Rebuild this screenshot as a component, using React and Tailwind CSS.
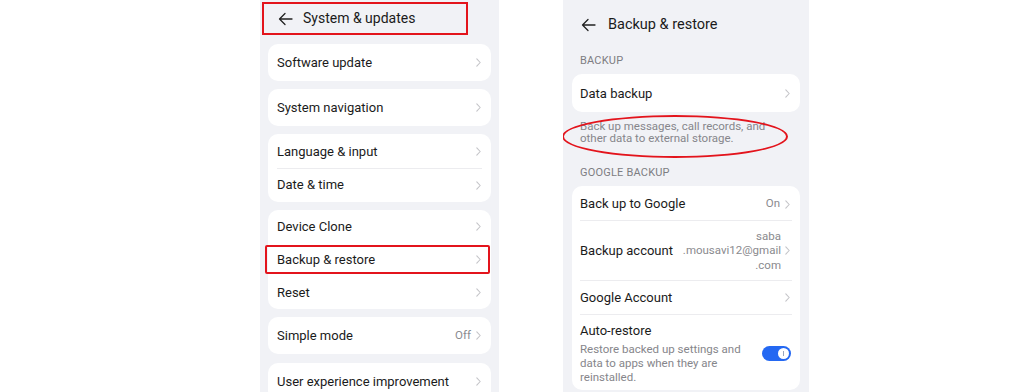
import React from "react";

const font = { fontFamily: "Roboto, 'Noto Sans', Arial, sans-serif" };

function Chevron() {
  return (
    <svg width="5" height="9" viewBox="0 0 5 9" className="shrink-0">
      <path d="M0.8 0.8 L4.2 4.5 L0.8 8.2" fill="none" stroke="#c4c4c8" strokeWidth="1.1" strokeLinecap="round" strokeLinejoin="round" />
    </svg>
  );
}

function Arrow() {
  return (
    <svg width="15" height="14" viewBox="0 0 15 14" className="shrink-0">
      <path d="M14 7 H1.5 M7 1.5 L1.5 7 L7 12.5" fill="none" stroke="#222" strokeWidth="1.3" strokeLinecap="round" strokeLinejoin="round" />
    </svg>
  );
}

function Row({ label, value, h = "h-[33px]", annotated }) {
  return (
    <div className={`relative flex items-center justify-between pl-[9px] pr-[10px] ${h}`}>
      <span className="text-[13px] text-[#1b1b1b]">{label}</span>
      <div className="flex items-center gap-[5px]">
        {value && <span className="text-[11.5px] text-[#8a8a8e]">{value}</span>}
        <Chevron />
      </div>
      {annotated && (
        <div className="absolute left-[-3px] right-[1px] top-[2px] bottom-[2px] border-2 border-[#e3141c] rounded-[2px]" />
      )}
    </div>
  );
}

function Divider() {
  return <div className="mx-[9px] h-px bg-[#ececef]" />;
}

function LeftPhone() {
  return (
    <div className="w-[239px] h-full bg-[#f1f2f6] overflow-hidden">
      <div className="mt-[2px] ml-[2px] w-[206px] h-[33px] border-2 border-[#e3141c] flex items-center pl-[14px]">
        <Arrow />
        <span className="ml-[10px] text-[14px] text-[#1b1b1b]">System &amp; updates</span>
      </div>
      <div className="mx-[8px] mt-[9px] flex flex-col gap-[8px]">
        <div className="bg-white rounded-[10px] py-[2px]">
          <Row label="Software update" />
        </div>
        <div className="bg-white rounded-[10px] py-[2px]">
          <Row label="System navigation" />
        </div>
        <div className="bg-white rounded-[10px] py-[1px]">
          <Row label="Language & input" />
          <Divider />
          <Row label="Date & time" h="h-[32px]" />
        </div>
        <div className="bg-white rounded-[10px]">
          <Row label="Device Clone" />
          <Row label="Backup & restore" />
          <Row label="Reset" />
        </div>
        <div className="bg-white rounded-[10px] py-[2px]">
          <Row label="Simple mode" value="Off" />
        </div>
        <div className="bg-white rounded-[10px] py-[2px] mt-[1px]">
          <Row label="User experience improvement" />
        </div>
      </div>
    </div>
  );
}

function LeftPhoneWithAnnotation() {
  return <LeftPhoneInner />;
}

function LeftPhoneInner() {
  return (
    <div className="w-[239px] h-full bg-[#f1f2f6] overflow-hidden">
      <div className="mt-[2px] ml-[2px] w-[206px] h-[33px] border-2 border-[#e3141c] flex items-center pl-[14px]">
        <Arrow />
        <span className="ml-[10px] text-[14px] text-[#1b1b1b]">System &amp; updates</span>
      </div>
      <div className="mx-[8px] mt-[9px] flex flex-col gap-[8px]">
        <div className="bg-white rounded-[10px] py-[2px]">
          <Row label="Software update" />
        </div>
        <div className="bg-white rounded-[10px] py-[2px]">
          <Row label="System navigation" />
        </div>
        <div className="bg-white rounded-[10px] py-[1px]">
          <Row label="Language & input" />
          <Divider />
          <Row label="Date & time" h="h-[32px]" />
        </div>
        <div className="bg-white rounded-[10px]">
          <Row label="Device Clone" />
          <Row label="Backup & restore" annotated />
          <Row label="Reset" />
        </div>
        <div className="bg-white rounded-[10px] py-[2px]">
          <Row label="Simple mode" value="Off" />
        </div>
        <div className="bg-white rounded-[10px] py-[2px] mt-[1px]">
          <Row label="User experience improvement" />
        </div>
      </div>
    </div>
  );
}

function RRow({ children, className = "" }) {
  return <div className={`flex items-center justify-between pl-[8px] pr-[10px] ${className}`}>{children}</div>;
}

function RDivider() {
  return <div className="mx-[8px] h-px bg-[#ececef]" />;
}

function RightPhone() {
  return (
    <div className="w-[246px] h-full bg-[#f1f2f6] overflow-hidden">
      <div className="h-[47px] flex items-center pl-[18px] pt-[2px]">
        <Arrow />
        <span className="ml-[12px] text-[14.5px] text-[#1b1b1b]">Backup &amp; restore</span>
      </div>
      <div className="h-[27px] flex items-center px-[17px] pt-[2px] text-[11px] text-[#7d7d82] tracking-[0.2px]">BACKUP</div>
      <div className="mx-[9px] bg-white rounded-[10px] h-[38px] flex items-center justify-between pl-[8px] pr-[10px] pt-[1px]">
        <span className="text-[13px] text-[#1b1b1b]">Data backup</span>
        <Chevron />
      </div>
      <div className="relative pt-[8px] pb-[16px] px-[17px] text-[11.5px] leading-[12px] text-[#86868b]">
        <div>Back up messages, call records, and</div>
        <div>other data to external storage.</div>
        <div className="absolute left-[-1px] top-[3px] w-[226px] h-[43px] rounded-[50%] border-2 border-[#e3141c]" />
      </div>
      <div className="h-[26px] flex items-center px-[17px] pt-[1px] text-[11px] text-[#7d7d82] tracking-[0.2px]">GOOGLE BACKUP</div>
      <div className="mx-[9px] bg-white rounded-[10px] flex flex-col">
        <RRow className="h-[34px] pt-[2px]">
          <span className="text-[13px] text-[#1b1b1b]">Back up to Google</span>
          <div className="flex items-center gap-[5px]">
            <span className="text-[11.5px] text-[#8a8a8e]">On</span>
            <Chevron />
          </div>
        </RRow>
        <RDivider />
        <RRow className="h-[59px]">
          <span className="text-[13px] text-[#1b1b1b]">Backup account</span>
          <div className="flex items-center gap-[4px]">
            <div className="text-right text-[11.5px] leading-[14.5px] text-[#8a8a8e]">
              <div>saba</div>
              <div>.mousavi12@gmail</div>
              <div>.com</div>
            </div>
            <Chevron />
          </div>
        </RRow>
        <RDivider />
        <RRow className="h-[33px]">
          <span className="text-[13px] text-[#1b1b1b]">Google Account</span>
          <Chevron />
        </RRow>
        <RDivider />
        <div className="flex items-center justify-between pl-[8px] pr-[9px] pt-[7px] pb-[6px]">
          <div>
            <div className="text-[13px] leading-[18px] text-[#1b1b1b]">Auto-restore</div>
            <div className="mt-[2px] w-[170px] text-[11.5px] leading-[14px] text-[#86868b]">
              Restore backed up settings and data to apps when they are reinstalled.
            </div>
          </div>
          <div className="mt-[1px] w-[29px] h-[15px] rounded-full bg-[#2468f2] flex items-center justify-end pr-[2px]">
            <div className="w-[11px] h-[11px] rounded-full bg-white flex items-center justify-center">
              <div className="w-px h-[5px] bg-[#9aa6bd]" />
            </div>
          </div>
        </div>
      </div>
    </div>
  );
}

export default function App() {
  return (
    <div className="w-[1024px] h-[392px] bg-white overflow-hidden flex pl-[260px] gap-[64px]" style={font}>
      <LeftPhoneWithAnnotation />
      <RightPhone />
    </div>
  );
}
